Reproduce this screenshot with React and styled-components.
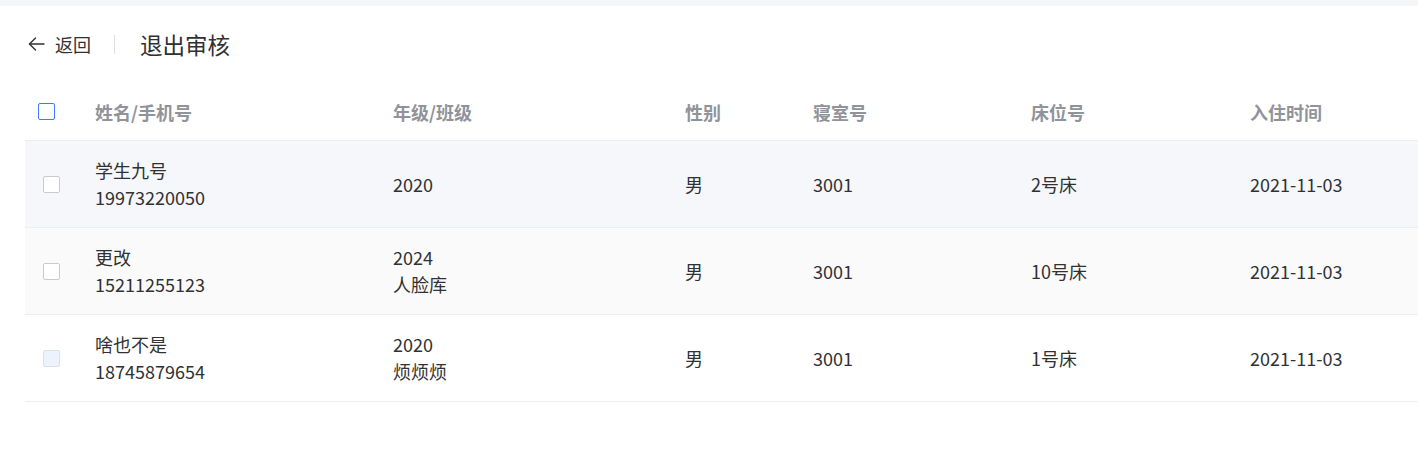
import React from "react";
import styled, { createGlobalStyle } from "styled-components";

const GlobalStyle = createGlobalStyle`
  html, body { margin: 0; padding: 0; background: #f5f6f8; }
  body { font-family: "Noto Sans CJK SC", "Noto Sans", sans-serif; overflow: hidden; }
  * { box-sizing: border-box; }
`;

const Page = styled.div`
  padding-top: 6px;
  width: 1418px;
  height: 450px;
  overflow: hidden;
`;

const Panel = styled.div`
  background: #fff;
  padding: 26px 0 0 25px;
  height: 444px;
  overflow: hidden;
`;

const Nav = styled.div`
  display: flex;
  align-items: center;
  height: 24px;
  margin-bottom: 27px;
`;

const Back = styled.div`
  display: flex;
  align-items: center;
  gap: 10px;
  font-size: 18px;
  color: #303133;
  padding-left: 3px;
  cursor: pointer;
`;

const Divider = styled.div`
  width: 1px;
  height: 19px;
  background: #dcdfe6;
  margin: 0 25px 0 23px;
`;

const Title = styled.div`
  font-size: 22.5px;
  color: #303133;
`;

const Table = styled.div`
  width: 1500px;
`;

const cols = "55px 298px 292px 128px 218px 219px 290px";

const HeadRow = styled.div`
  display: grid;
  grid-template-columns: ${cols};
  height: 58px;
  align-items: center;
  border-bottom: 1px solid #ebeef5;
`;

const Row = styled.div`
  display: grid;
  grid-template-columns: ${cols};
  height: 87px;
  align-items: center;
  border-bottom: 1px solid #ebeef5;
  background: ${(p) => p.$bg};
`;

const HeadCell = styled.div`
  padding-left: 15px;
  font-size: 18px;
  font-weight: 700;
  color: #909399;
`;

const Cell = styled.div`
  padding-left: 15px;
  font-size: 18px;
  line-height: 27px;
  color: #303133;
`;

const CheckCell = styled.div`
  display: flex;
  align-items: center;
  padding-left: ${(p) => p.$pl}px;
`;

const borderFor = { active: "#3c7bff", normal: "#c8cacf", disabled: "#dcdfe6" };

const Box = styled.span`
  display: inline-block;
  width: 17px;
  height: 17px;
  border-radius: 2px;
  border: 1px solid ${(p) => borderFor[p.$variant]};
  background: ${(p) => (p.$variant === "disabled" ? "#edf2fc" : "#fff")};
`;

const rows = [
  { name: "学生九号", phone: "19973220050", grade: "2020", cls: "", sex: "男", dorm: "3001", bed: "2号床", time: "2021-11-03", bg: "#f5f7fa", box: "normal" },
  { name: "更改", phone: "15211255123", grade: "2024", cls: "人脸库", sex: "男", dorm: "3001", bed: "10号床", time: "2021-11-03", bg: "#fafafa", box: "normal" },
  { name: "啥也不是", phone: "18745879654", grade: "2020", cls: "烦烦烦", sex: "男", dorm: "3001", bed: "1号床", time: "2021-11-03", bg: "#fff", box: "disabled" },
];

const Arrow = () => (
  <svg width="17" height="14" viewBox="0 0 17 14" fill="none" stroke="#303133" strokeWidth="1.4" strokeLinecap="round" strokeLinejoin="round">
    <path d="M16 7H1.5" />
    <path d="M7.5 1L1.5 7l6 6" />
  </svg>
);

export default function App() {
  return (
    <>
      <GlobalStyle />
      <Page>
        <Panel>
          <Nav>
            <Back>
              <Arrow />
              <span>返回</span>
            </Back>
            <Divider />
            <Title>退出审核</Title>
          </Nav>
          <Table>
            <HeadRow>
              <CheckCell $pl={13}>
                <Box $variant="active" />
              </CheckCell>
              <HeadCell>姓名/手机号</HeadCell>
              <HeadCell>年级/班级</HeadCell>
              <HeadCell>性别</HeadCell>
              <HeadCell>寝室号</HeadCell>
              <HeadCell>床位号</HeadCell>
              <HeadCell>入住时间</HeadCell>
            </HeadRow>
            {rows.map((r) => (
              <Row key={r.phone} $bg={r.bg}>
                <CheckCell $pl={18}>
                  <Box $variant={r.box} />
                </CheckCell>
                <Cell>
                  <div>{r.name}</div>
                  <div>{r.phone}</div>
                </Cell>
                <Cell>
                  <div>{r.grade}</div>
                  {r.cls && <div>{r.cls}</div>}
                </Cell>
                <Cell>{r.sex}</Cell>
                <Cell>{r.dorm}</Cell>
                <Cell>{r.bed}</Cell>
                <Cell>{r.time}</Cell>
              </Row>
            ))}
          </Table>
        </Panel>
      </Page>
    </>
  );
}
